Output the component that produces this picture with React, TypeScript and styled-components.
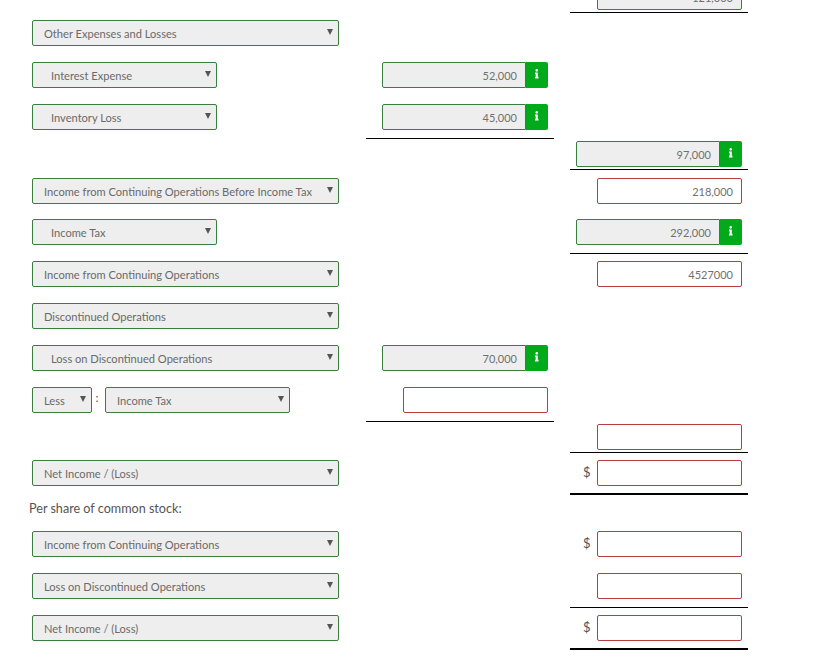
import React from "react";
import styled, { createGlobalStyle } from "styled-components";
import { FaInfo } from "react-icons/fa";

const Global = createGlobalStyle`
  html, body { margin: 0; padding: 0; background: #fff; overflow: hidden; }
  body { font-family: Lato, "Open Sans", sans-serif; color: #555; }
`;

const Sheet = styled.div`
  width: 824px;
  height: 668px;
  overflow: hidden;
`;

const Row = styled.div<{ $top: number }>`
  display: grid;
  grid-template-columns: 366px 188px 16px 178px;
  align-items: start;
  margin-top: ${(p) => p.$top}px;
`;

const Label = styled.div`
  grid-column: 1;
  display: flex;
  align-items: center;
  padding-left: 32px;
`;

const Colon = styled.span`
  width: 10px;
  margin-right: 3px;
  text-align: center;
  font-size: 12px;
  line-height: 22px;
  align-self: flex-start;
`;

const Select = styled.div<{ $width: number; $indent?: boolean }>`
  box-sizing: border-box;
  width: ${(p) => p.$width}px;
  height: 26px;
  display: flex;
  align-items: center;
  justify-content: space-between;
  padding: 1px 5px 0 ${(p) => (p.$indent ? 18 : 11)}px;
  background: #eee;
  border: 1px solid #3b7d3f;
  border-radius: 2px;
  font-size: 11.1px;
  color: #6a6a6a;
  white-space: nowrap;
`;

const Arrow = styled.svg`
  width: 6px;
  height: 6px;
  margin-top: -4px;
  fill: #555;
  flex: none;
`;

const Cell = styled.div<{ $col: 2 | 4; $rule?: number; $thick?: boolean }>`
  grid-column: ${(p) => p.$col};
  display: flex;
  justify-content: flex-end;
  align-items: center;
  padding-right: 6px;
  padding-bottom: ${(p) => p.$rule ?? 0}px;
  border-bottom: ${(p) => (p.$rule === undefined ? "none" : p.$thick ? "2px solid #000" : "1px solid #000")};
`;

const Dollar = styled.span`
  width: 14px;
  margin-top: -3px;
  font-size: 13px;
  color: #4a5560;
`;

const Amount = styled.div<{ $width: number; $wrong?: boolean; $joined?: boolean }>`
  box-sizing: border-box;
  width: ${(p) => p.$width}px;
  height: 26px;
  display: flex;
  align-items: center;
  justify-content: flex-end;
  padding: 1px 8px 0 0;
  font-size: 11px;
  color: #707070;
  background: ${(p) => (p.$wrong ? "#fff" : "#eee")};
  border: 1px solid ${(p) => (p.$wrong ? "#b53f3f" : "#3b7d3f")};
  border-radius: ${(p) => (p.$joined ? "2px 0 0 2px" : "2px")};
`;

const InfoButton = styled.div`
  width: 22px;
  height: 26px;
  flex: none;
  display: flex;
  align-items: center;
  justify-content: center;
  padding-bottom: 2px;
  box-sizing: border-box;
  background: #00aa1b;
  color: #fff;
  border-radius: 0 2px 2px 0;
  font-size: 9.5px;
`;

const Note = styled.div`
  padding-left: 29px;
  margin-top: 5px;
  font-size: 12.6px;
  line-height: 17px;
  color: #555;
`;

const Drop = ({ text, width = 307, indent }: { text: string; width?: number; indent?: boolean }) => (
  <Select $width={width} $indent={indent}>
    <span>{text}</span>
    <Arrow viewBox="0 0 6 6"><path d="M0 0h6L3 6z" /></Arrow>
  </Select>
);

const Checked = ({ value, width = 144 }: { value: string; width?: number }) => (
  <>
    <Amount $width={width} $joined>{value}</Amount>
    <InfoButton><FaInfo /></InfoButton>
  </>
);

export default function App() {
  return (
    <Sheet>
      <Global />
      <Row $top={-16}>
        <Cell $col={4} $rule={2}><Amount $width={145}>121,000</Amount></Cell>
      </Row>
      <Row $top={7}>
        <Label><Drop text="Other Expenses and Losses" /></Label>
      </Row>
      <Row $top={16}>
        <Label><Drop text="Interest Expense" width={185} indent /></Label>
        <Cell $col={2}><Checked value="52,000" /></Cell>
      </Row>
      <Row $top={16}>
        <Label><Drop text="Inventory Loss" width={185} indent /></Label>
        <Cell $col={2} $rule={8}><Checked value="45,000" /></Cell>
      </Row>
      <Row $top={2}>
        <Cell $col={4} $rule={2}><Checked value="97,000" /></Cell>
      </Row>
      <Row $top={8}>
        <Label><Drop text="Income from Continuing Operations Before Income Tax" /></Label>
        <Cell $col={4}><Amount $width={145} $wrong>218,000</Amount></Cell>
      </Row>
      <Row $top={15}>
        <Label><Drop text="Income Tax" width={185} indent /></Label>
        <Cell $col={4} $rule={8}><Checked value="292,000" /></Cell>
      </Row>
      <Row $top={7}>
        <Label><Drop text="Income from Continuing Operations" /></Label>
        <Cell $col={4}><Amount $width={145} $wrong>4527000</Amount></Cell>
      </Row>
      <Row $top={16}>
        <Label><Drop text="Discontinued Operations" /></Label>
      </Row>
      <Row $top={16}>
        <Label><Drop text="Loss on Discontinued Operations" indent /></Label>
        <Cell $col={2}><Checked value="70,000" /></Cell>
      </Row>
      <Row $top={16}>
        <Label>
          <Drop text="Less" width={60} />
          <Colon>:</Colon>
          <Drop text="Income Tax" width={185} />
        </Label>
        <Cell $col={2} $rule={8}><Amount $width={145} $wrong /></Cell>
      </Row>
      <Row $top={2}>
        <Cell $col={4} $rule={2}><Amount $width={145} $wrong /></Cell>
      </Row>
      <Row $top={7}>
        <Label><Drop text="Net Income / (Loss)" /></Label>
        <Cell $col={4} $rule={7} $thick><Dollar>$</Dollar><Amount $width={145} $wrong /></Cell>
      </Row>
      <Note>Per share of common stock:</Note>
      <Row $top={14}>
        <Label><Drop text="Income from Continuing Operations" /></Label>
        <Cell $col={4}><Dollar>$</Dollar><Amount $width={145} $wrong /></Cell>
      </Row>
      <Row $top={16}>
        <Label><Drop text="Loss on Discontinued Operations" /></Label>
        <Cell $col={4} $rule={8}><Amount $width={145} $wrong /></Cell>
      </Row>
      <Row $top={7}>
        <Label><Drop text="Net Income / (Loss)" /></Label>
        <Cell $col={4} $rule={7} $thick><Dollar>$</Dollar><Amount $width={145} $wrong /></Cell>
      </Row>
    </Sheet>
  );
}
